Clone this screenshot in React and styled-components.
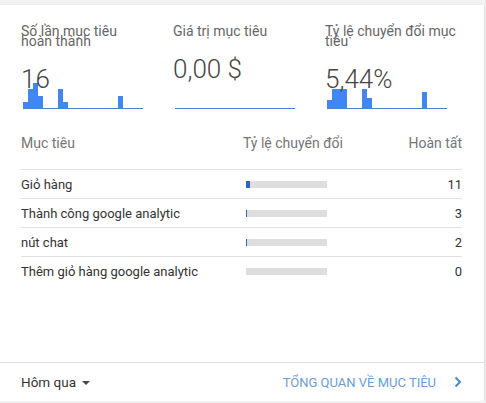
import React from 'react';
import styled, { createGlobalStyle } from 'styled-components';

const GlobalStyle = createGlobalStyle`
    html, body {
        margin:0;
        padding:0;
        background:#f1f1f1;
        font-family:Roboto, "Noto Sans", Arial, sans-serif;
    }
`;

const Card = styled.div`
    margin-top:5px;
    width:484px;
    height:396px;
    background:#fff;
    box-shadow:0 1px 2px rgba(0,0,0,0.25);
    display:flex;
    flex-direction:column;
    box-sizing:border-box;
`;

const Metrics = styled.div`
    display:grid;
    grid-template-columns:repeat(3, 152px);
    padding:21px 0 0 21px;
`;

const Metric = styled.div`
    display:grid;
    height:83px;
    > * {
        grid-area:1 / 1;
    }
`;

const Head = styled.div`
    align-self:start;
    position:relative;
    z-index:1;
`;

const Title = styled.div`
    font-size:14px;
    line-height:10px;
    color:#666;
    width:${p => p.$w}px;
`;

const Value = styled.div`
    margin-top:20px;
    font-size:26px;
    line-height:26px;
    font-weight:300;
    color:#454545;
`;

const Spark = styled.div`
    align-self:end;
    margin-left:2px;
    width:120px;
    height:26px;
    display:flex;
    align-items:flex-end;
    border-bottom:1px solid #4a80d0;
`;

const SparkBar = styled.div`
    flex:0 0 5px;
    background:#4285f4;
`;

const Table = styled.div`
    margin:26px 22px 0 21px;
`;

const Row = styled.div`
    display:grid;
    grid-template-columns:222px 1fr auto;
    align-items:center;
    font-size:${p => p.$head ? '14px' : '13px'};
    color:${p => p.$head ? '#757575' : '#333'};
    height:${p => p.$head ? '34px' : '28px'};
    ${p => p.$head && 'align-items:start; line-height:16px;'}
    border-bottom:${p => p.$last ? 'none' : '1px solid #e0e0e0'};
`;

const Num = styled.div`
    text-align:right;
`;

const Track = styled.div`
    margin-left:3px;
    width:81px;
    height:7px;
    background:#dedede;
`;

const Fill = styled.div`
    height:100%;
    background:#2d65c6;
`;

const Footer = styled.div`
    margin-top:auto;
    height:38px;
    border-top:1px solid #e0e0e0;
    display:flex;
    align-items:center;
    justify-content:space-between;
    padding:0 22px 0 21px;
    font-size:13px;
`;

const Period = styled.div`
    display:flex;
    align-items:center;
    gap:6px;
    color:#333;
    font-size:13.5px;
`;

const Caret = styled.span`
    width:0;
    height:0;
    border-left:4px solid transparent;
    border-right:4px solid transparent;
    border-top:4px solid #444;
    margin-top:1px;
`;

const LinkBox = styled.div`
    display:flex;
    align-items:center;
    gap:18px;
    color:#6a9bd9;
    text-transform:uppercase;
`;

const spark1 = { 0: 6, 1: 19, 2: 25, 3: 12, 7: 19, 8: 6, 19: 12 };
const spark3 = { 0: 8, 1: 19, 2: 19, 3: 19, 7: 19, 8: 10, 19: 16 };

const metrics = [
    { title: 'Số lần mục tiêu hoàn thành', value: '16', spark: spark1, w: 120 },
    { title: 'Giá trị mục tiêu', value: '0,00 $', spark: {}, w: 140 },
    { title: 'Tỷ lệ chuyển đổi mục tiêu', value: '5,44%', spark: spark3, w: 140 },
];

const goals = [
    { name: 'Giỏ hàng', fill: '4px', count: 11 },
    { name: 'Thành công google analytic', fill: '1px', count: 3 },
    { name: 'nút chat', fill: '1px', count: 2 },
    { name: 'Thêm giỏ hàng google analytic', fill: '0px', count: 0 },
];

function Sparkline({ data }) {
    const bars = [];
    for (let i = 0; i < 24; i++) {
        bars.push(<SparkBar key={i} style={{ height: (data[i] || 0) + 'px' }} />);
    }
    return <Spark>{bars}</Spark>;
}

export default function App() {
    return (
        <>
            <GlobalStyle />
            <Card>
                <Metrics>
                    {metrics.map(m => (
                        <Metric key={m.title}>
                            <Sparkline data={m.spark} />
                            <Head>
                                <Title $w={m.w}>{m.title}</Title>
                                <Value>{m.value}</Value>
                            </Head>
                        </Metric>
                    ))}
                </Metrics>
                <Table>
                    <Row $head>
                        <div>Mục tiêu</div>
                        <div>Tỷ lệ chuyển đổi</div>
                        <Num>Hoàn tất</Num>
                    </Row>
                    {goals.map((g, i) => (
                        <Row key={g.name} $last={i === goals.length - 1}>
                            <div>{g.name}</div>
                            <Track><Fill style={{ width: g.fill }} /></Track>
                            <Num>{g.count}</Num>
                        </Row>
                    ))}
                </Table>
                <Footer>
                    <Period>Hôm qua <Caret /></Period>
                    <LinkBox>
                        <span>Tổng quan về mục tiêu</span>
                        <svg width="8" height="12" viewBox="0 0 8 12">
                            <path d="M1.5 1.5 L6 6 L1.5 10.5" fill="none" stroke="#4a86d0" strokeWidth="2" />
                        </svg>
                    </LinkBox>
                </Footer>
            </Card>
        </>
    );
}
